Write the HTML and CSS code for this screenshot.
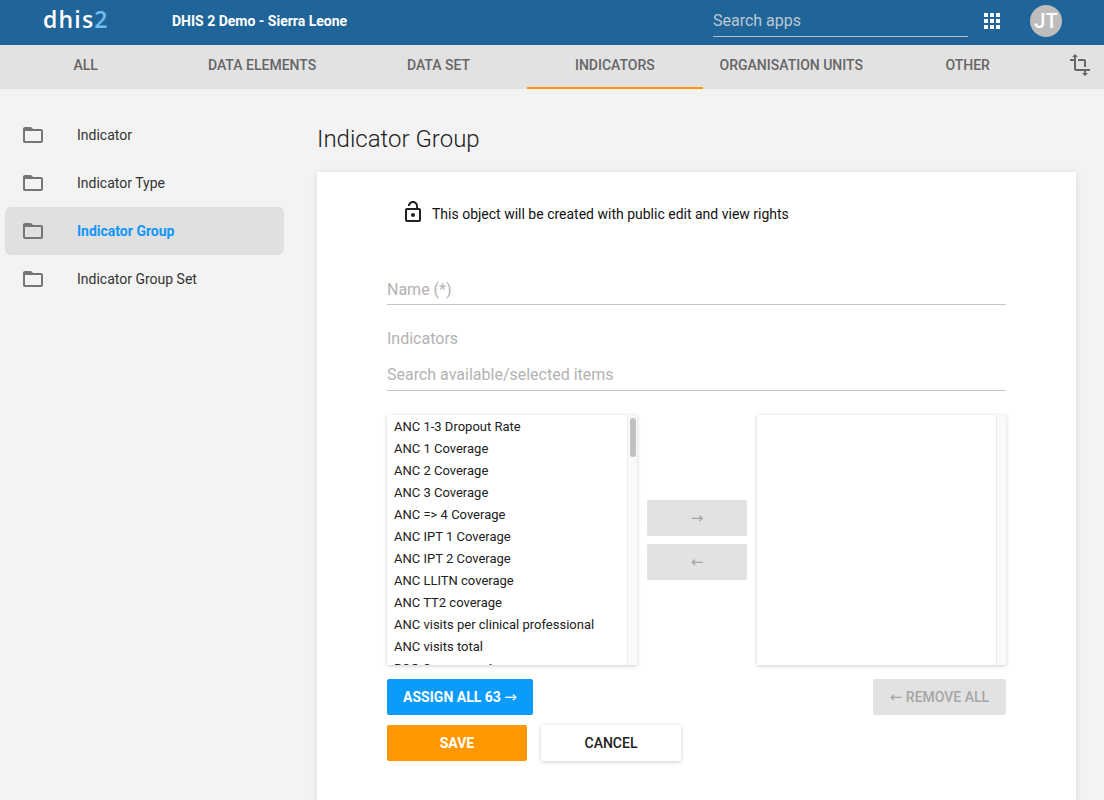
FILE: index.html
```html
<!DOCTYPE html>
<html lang="en">
<head>
  <meta charset="UTF-8" />
  <title>Maintenance</title>
  <link rel="stylesheet" href="styles.css">
</head>
<body>

  <header class="topbar">
    <div class="logo">dhis<span>2</span></div>
    <div class="instance">DHIS 2 Demo - Sierra Leone</div>
    <div class="app-search">Search apps</div>
    <svg class="apps-icon" viewBox="0 0 24 24" width="24" height="24"><path d="M4 8h4V4H4v4zm6 12h4v-4h-4v4zm-6 0h4v-4H4v4zm0-6h4v-4H4v4zm6 0h4v-4h-4v4zm6-10v4h4V4h-4zm-6 4h4V4h-4v4zm6 6h4v-4h-4v4zm0 6h4v-4h-4v4z"/></svg>
    <div class="avatar">JT</div>
  </header>

  <nav class="tabs">
    <div class="tab">ALL</div>
    <div class="tab">DATA ELEMENTS</div>
    <div class="tab">DATA SET</div>
    <div class="tab active">INDICATORS</div>
    <div class="tab">ORGANISATION UNITS</div>
    <div class="tab">OTHER</div>
    <svg class="transform-icon" viewBox="0 0 24 24" width="24" height="24"><path d="M22 18v-2H8V4h2L7 1 4 4h2v2H2v2h4v8c0 1.1.9 2 2 2h8v2h-2l3 3 3-3h-2v-2h4zM10 8h6v6h2V8c0-1.1-.9-2-2-2h-6v2z"/></svg>
  </nav>

  <div class="page">
    <aside class="sidebar">
      <a class="side-item">
        <svg viewBox="0 0 24 24" width="24" height="24"><path d="M20 6h-8l-2-2H4c-1.1 0-1.99.9-1.99 2L2 18c0 1.1.9 2 2 2h16c1.1 0 2-.9 2-2V8c0-1.1-.9-2-2-2zm0 12H4V8h16v10z"/></svg>
        <span>Indicator</span>
      </a>
      <a class="side-item">
        <svg viewBox="0 0 24 24" width="24" height="24"><path d="M20 6h-8l-2-2H4c-1.1 0-1.99.9-1.99 2L2 18c0 1.1.9 2 2 2h16c1.1 0 2-.9 2-2V8c0-1.1-.9-2-2-2zm0 12H4V8h16v10z"/></svg>
        <span>Indicator Type</span>
      </a>
      <a class="side-item active">
        <svg viewBox="0 0 24 24" width="24" height="24"><path d="M20 6h-8l-2-2H4c-1.1 0-1.99.9-1.99 2L2 18c0 1.1.9 2 2 2h16c1.1 0 2-.9 2-2V8c0-1.1-.9-2-2-2zm0 12H4V8h16v10z"/></svg>
        <span>Indicator Group</span>
      </a>
      <a class="side-item">
        <svg viewBox="0 0 24 24" width="24" height="24"><path d="M20 6h-8l-2-2H4c-1.1 0-1.99.9-1.99 2L2 18c0 1.1.9 2 2 2h16c1.1 0 2-.9 2-2V8c0-1.1-.9-2-2-2zm0 12H4V8h16v10z"/></svg>
        <span>Indicator Group Set</span>
      </a>
    </aside>

    <main class="content">
      <h1>Indicator Group</h1>
      <div class="card">
        <div class="sharing">
          <svg viewBox="0 0 24 24" width="24" height="24"><path d="M12 17c1.1 0 2-.9 2-2s-.9-2-2-2-2 .9-2 2 .9 2 2 2zm6-9h-1V6c0-2.76-2.24-5-5-5S7 3.24 7 6h1.9c0-1.71 1.39-3.1 3.1-3.1 1.71 0 3.1 1.39 3.1 3.1v2H6c-1.1 0-2 .9-2 2v10c0 1.1.9 2 2 2h12c1.1 0 2-.9 2-2V10c0-1.1-.9-2-2-2zm0 12H6V10h12v10z"/></svg>
          <span>This object will be created with public edit and view rights</span>
        </div>

        <div class="field name-field">Name (*)</div>
        <div class="group-label">Indicators</div>
        <div class="field search-field">Search available/selected items</div>

        <div class="transfer">
          <div class="list-box">
            <ul class="items">
              <li>ANC 1-3 Dropout Rate</li>
              <li>ANC 1 Coverage</li>
              <li>ANC 2 Coverage</li>
              <li>ANC 3 Coverage</li>
              <li>ANC =&gt; 4 Coverage</li>
              <li>ANC IPT 1 Coverage</li>
              <li>ANC IPT 2 Coverage</li>
              <li>ANC LLITN coverage</li>
              <li>ANC TT2 coverage</li>
              <li>ANC visits per clinical professional</li>
              <li>ANC visits total</li>
              <li>BCG Coverage &lt;1y</li>
            </ul>
            <div class="gutter"><div class="thumb"></div></div>
          </div>
          <div class="move-btns">
            <div class="btn btn-disabled"><span class="arrow">→</span></div>
            <div class="btn btn-disabled"><span class="arrow">←</span></div>
          </div>
          <div class="list-box">
            <ul class="items"></ul>
            <div class="gutter"></div>
          </div>
        </div>

        <div class="bulk-row">
          <div class="btn btn-blue">ASSIGN ALL 63 <span class="arrow">→</span></div>
          <div class="btn btn-disabled btn-remove"><span class="arrow">←</span> REMOVE ALL</div>
        </div>

        <div class="actions">
          <div class="btn btn-orange">SAVE</div>
          <div class="btn btn-white">CANCEL</div>
        </div>
      </div>
    </main>
  </div>

</body>
</html>
```

FILE: styles.css
```css
html, body {
  height: 100%;
  overflow: hidden;
}

body {
  margin: 0;
  font-family: Roboto, sans-serif;
  background: #f3f3f3;
  color: #212121;
}

.topbar {
  display: flex;
  align-items: center;
  height: 45px;
  background: #206599;
  color: #fff;
}

.logo {
  width: 129px;
  margin-left: 43px;
  margin-bottom: 8px;
  font-family: "Open Sans", sans-serif;
  font-size: 23px;
  font-weight: 600;
  letter-spacing: 1.2px;
  line-height: 30px;
}

.logo span {
  color: #70bdf2;
}

.instance {
  width: 541px;
  margin-bottom: 3px;
  font-size: 14px;
  font-weight: 700;
}

.app-search {
  width: 255px;
  height: 31px;
  line-height: 30px;
  margin-bottom: 3px;
  box-sizing: border-box;
  border-bottom: 1px solid #b9bdbf;
  font-size: 16px;
  color: #bcc8d1;
}

.apps-icon {
  margin-left: 12px;
  margin-bottom: 3px;
  fill: #fff;
}

.avatar {
  width: 32px;
  height: 32px;
  margin-left: 26px;
  margin-bottom: 3px;
  border-radius: 50%;
  background: #bdbdbd;
  font-size: 20px;
  font-weight: 500;
  line-height: 32px;
  text-align: center;
}

.tabs {
  display: flex;
  align-items: stretch;
  height: 44px;
  margin-left: -2.5px;
  background: #e2e2e2;
}

.tab {
  box-sizing: border-box;
  width: 176.4px;
  font-size: 14px;
  font-weight: 500;
  line-height: 40px;
  text-align: center;
  color: #666;
}

.tab.active {
  border-bottom: 2px solid #ff9800;
}

.transform-icon {
  margin: 8px 0 0 12.5px;
  fill: #666;
}

.page {
  display: flex;
}

.sidebar {
  box-sizing: border-box;
  width: 317px;
  padding: 22px 33px 0 5px;
}

.side-item {
  display: flex;
  align-items: center;
  height: 48px;
  padding-left: 16px;
  border-radius: 6px;
  font-size: 14px;
  color: #333;
}

.side-item svg {
  margin-right: 32px;
  fill: #757575;
}

.side-item.active {
  background: #e0e0e0;
  font-weight: 700;
  color: #0f96fb;
}

.content {
  width: 759px;
}

h1 {
  margin: 0;
  padding: 36px 0 19px;
  font-size: 24px;
  font-weight: 300;
  line-height: 28px;
}

.card {
  box-sizing: border-box;
  height: 720px;
  padding: 28px 70px 0;
  background: #fff;
  box-shadow: 0 1px 6px rgba(0, 0, 0, 0.12);
}

.sharing {
  display: flex;
  align-items: center;
  margin-left: 14px;
  font-size: 14px;
  color: #111;
}

.sharing svg {
  margin-right: 7px;
  fill: #212121;
}

.sharing span {
  padding-top: 4px;
}

.field {
  height: 30px;
  line-height: 30px;
  box-sizing: border-box;
  border-bottom: 1px solid #c4c4c4;
  font-size: 16px;
  color: #b3b3b3;
}

.name-field {
  margin-top: 51px;
}

.group-label {
  margin-top: 24px;
  font-size: 16px;
  line-height: 20px;
  color: #b3b3b3;
}

.search-field {
  margin-top: 12px;
  line-height: 28px;
}

.transfer {
  display: flex;
  margin-top: 24px;
}

.list-box {
  display: flex;
  width: 250px;
  height: 250px;
  overflow: hidden;
  background: #fff;
  box-shadow: 0 1px 4px rgba(0, 0, 0, 0.2);
}

.list-box:last-child {
  width: 249px;
}

.items {
  flex: 1;
  margin: 0;
  padding: 1px 0 0 7px;
  list-style: none;
  font-size: 13px;
  line-height: 22px;
}

.gutter {
  box-sizing: border-box;
  width: 10px;
  padding: 3px 1px 0 2px;
  border-left: 1px solid #ececec;
  background: #fafafa;
}

.thumb {
  height: 39px;
  border-radius: 4px;
  background: #c1c1c1;
}

.move-btns {
  display: flex;
  flex-direction: column;
  gap: 8px;
  width: 100px;
  margin: 85px 10px 0;
}

.btn {
  box-sizing: border-box;
  height: 36px;
  border-radius: 2px;
  font-size: 14px;
  font-weight: 500;
  line-height: 36px;
  text-align: center;
}

.arrow {
  font-family: "DejaVu Sans", sans-serif;
  font-size: 15px;
  font-weight: 400;
}

.btn-disabled {
  background: #e2e2e2;
  color: #a6a6a6;
}

.bulk-row {
  display: flex;
  justify-content: space-between;
  margin-top: 14px;
}

.btn-blue {
  width: 146px;
  background: #0a9bfb;
  color: #fff;
  font-weight: 700;
}

.btn-remove {
  width: 133px;
}

.actions {
  display: flex;
  gap: 14px;
  margin-top: 10px;
}

.btn-orange {
  width: 140px;
  background: #ff9800;
  color: #fff;
  font-weight: 700;
}

.btn-white {
  width: 140px;
  background: #fff;
  color: #212121;
  box-shadow: 0 1px 4px rgba(0, 0, 0, 0.2);
}
```
